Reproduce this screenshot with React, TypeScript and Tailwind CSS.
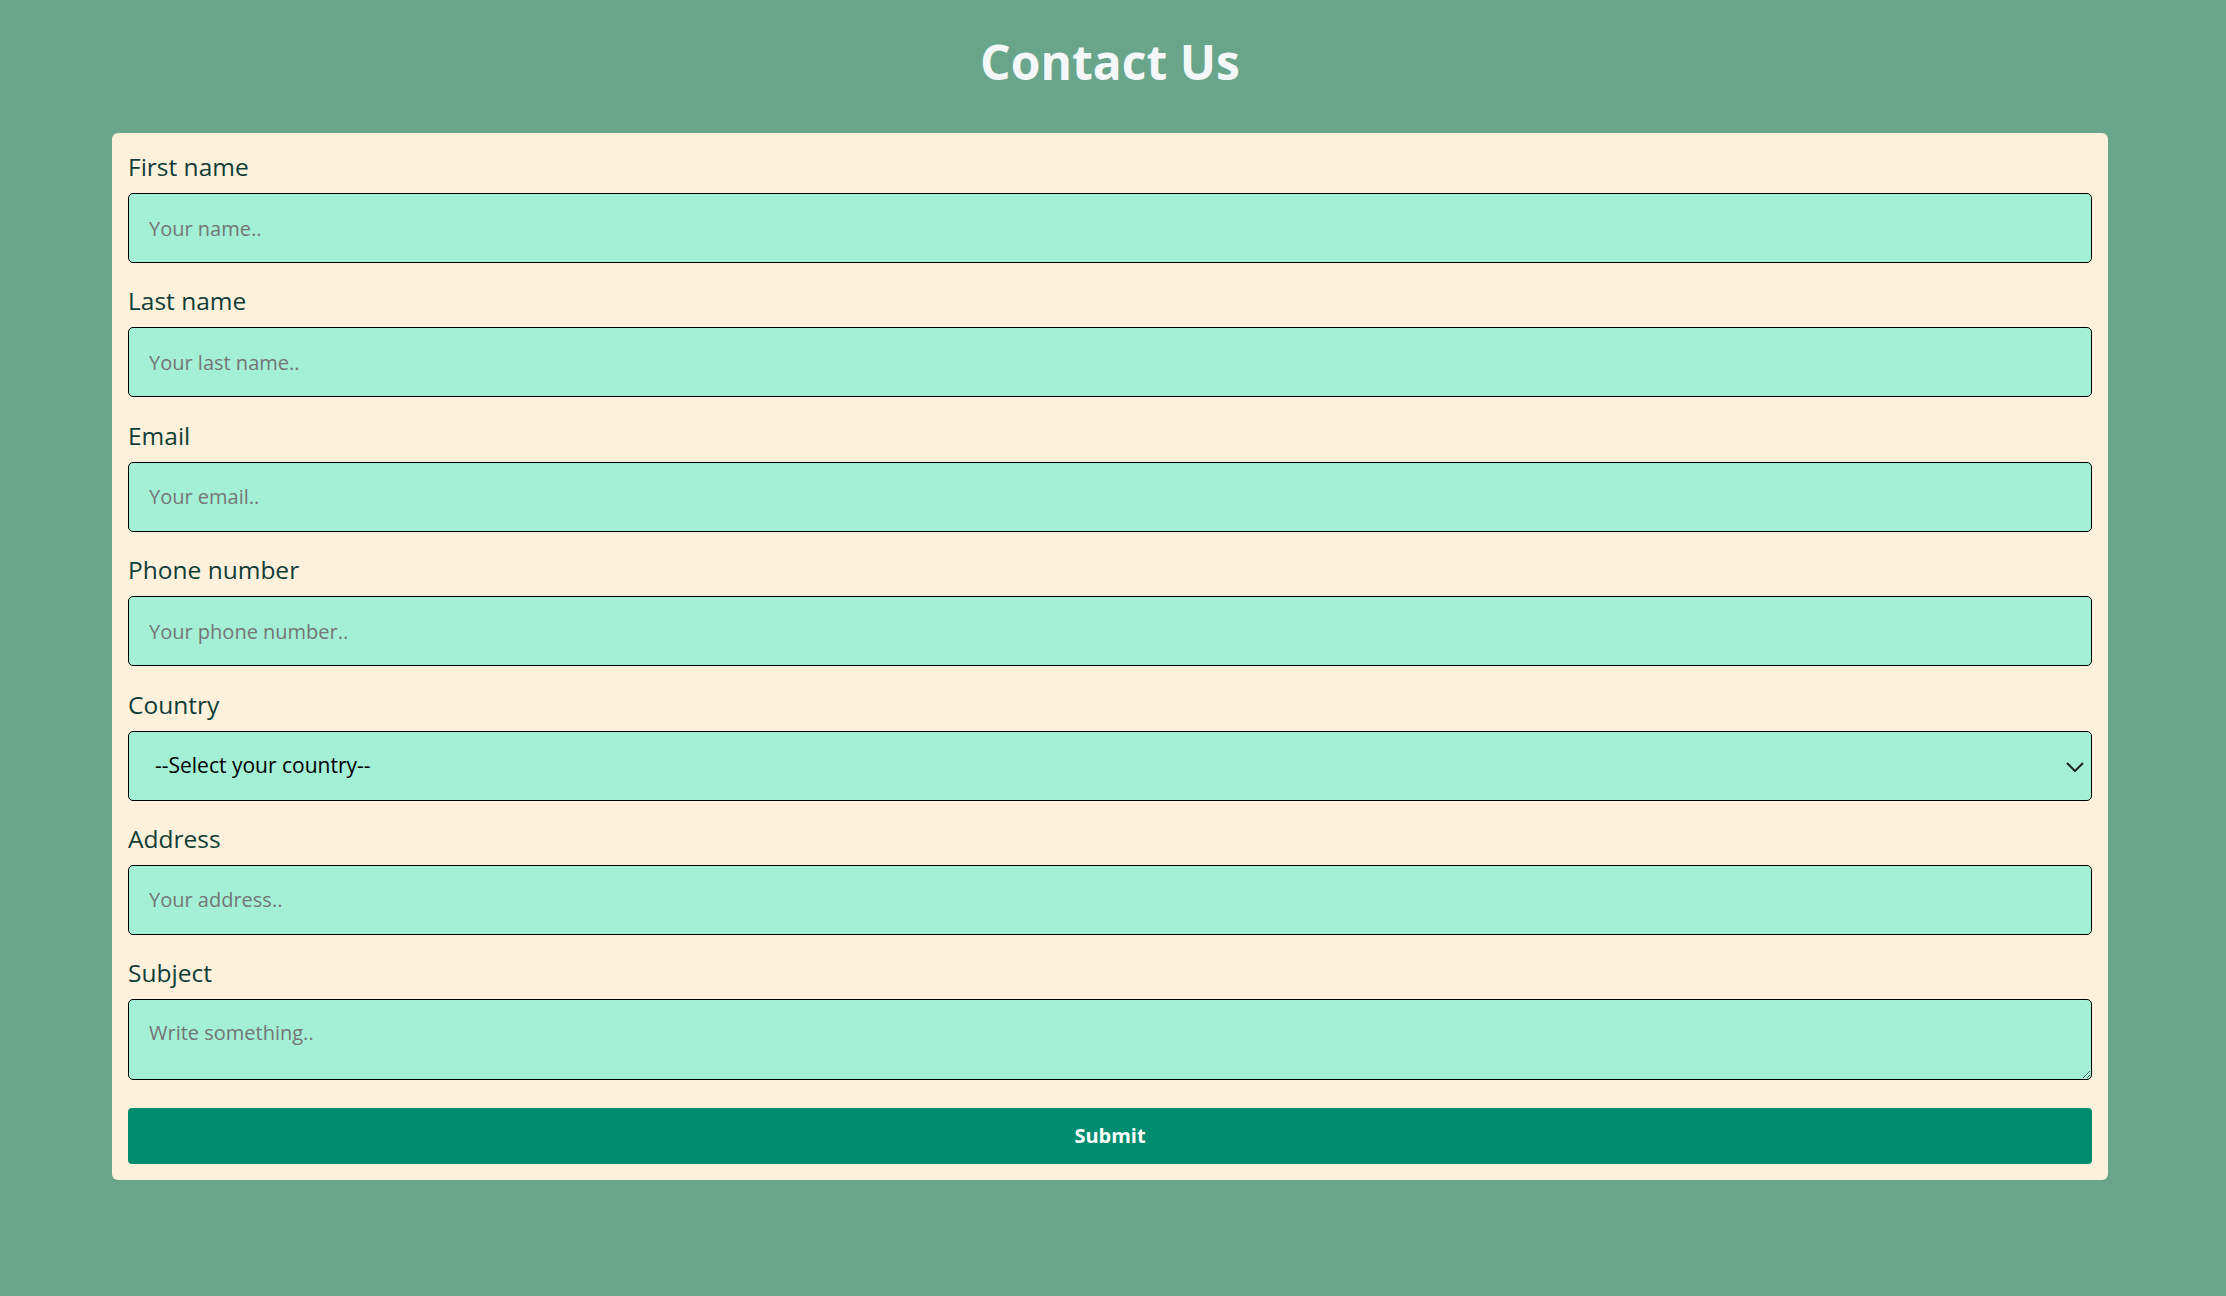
import React from "react";

const font = { fontFamily: '"Open Sans", "Noto Sans", sans-serif' };

function Field({ label, placeholder }: { label: string; placeholder: string }) {
  return (
    <div className="mb-[20.4px]">
      <label className="block text-[24.5px] leading-[36px] text-[#0f3d37]">{label}</label>
      <input
        type="text"
        placeholder={placeholder}
        className="mt-2 block h-[70px] w-full rounded-[5px] border border-black bg-[#a3f0d6] pl-[20px] text-[20px] text-black outline-none placeholder:text-[#757575]"
      />
    </div>
  );
}

export default function App() {
  return (
    <div className="min-h-screen w-full bg-[#68a58a]" style={font}>
      <div className="ml-[112px] w-[1996px] pb-[116px]">
        <h1 className="pt-[26px] pb-[35px] text-center text-[48px] font-bold leading-[72px] text-[#f4f7f8]">
          Contact Us
        </h1>
        <form className="rounded-[6px] bg-[#fef1dc] px-4 pt-4 pb-4" onSubmit={(e) => e.preventDefault()}>
          <Field label="First name" placeholder="Your name.." />
          <Field label="Last name" placeholder="Your last name.." />
          <Field label="Email" placeholder="Your email.." />
          <Field label="Phone number" placeholder="Your phone number.." />
          <div className="mb-[20.4px]">
            <label className="block text-[24.5px] leading-[36px] text-[#0f3d37]">Country</label>
            <div className="relative mt-2">
              <select
                defaultValue=""
                className="block h-[70px] w-full appearance-none rounded-[5px] border border-black bg-[#a3f0d6] pl-[26px] text-[21px] text-black outline-none"
              >
                <option value="">--Select your country--</option>
                <option value="us">United States</option>
                <option value="uk">United Kingdom</option>
              </select>
              <svg
                className="pointer-events-none absolute right-[8px] top-[31px]"
                width="18"
                height="10"
                viewBox="0 0 18 10"
                fill="none"
              >
                <path d="M1 1 L9 9 L17 1" stroke="#222" strokeWidth="2" />
              </svg>
            </div>
          </div>
          <Field label="Address" placeholder="Your address.." />
          <div>
            <label className="block text-[24.5px] leading-[36px] text-[#0f3d37]">Subject</label>
            <textarea
              placeholder="Write something.."
              className="mt-2 block h-[81px] w-full rounded-[5px] border border-black bg-[#a3f0d6] px-[20px] pt-[18px] text-[20px] text-black outline-none placeholder:text-[#757575]"
            />
          </div>
          <button
            type="submit"
            className="mt-[28px] block h-[56px] w-full rounded-[4px] bg-[#008c6f] text-[20px] font-bold text-white"
          >
            Submit
          </button>
        </form>
      </div>
    </div>
  );
}
